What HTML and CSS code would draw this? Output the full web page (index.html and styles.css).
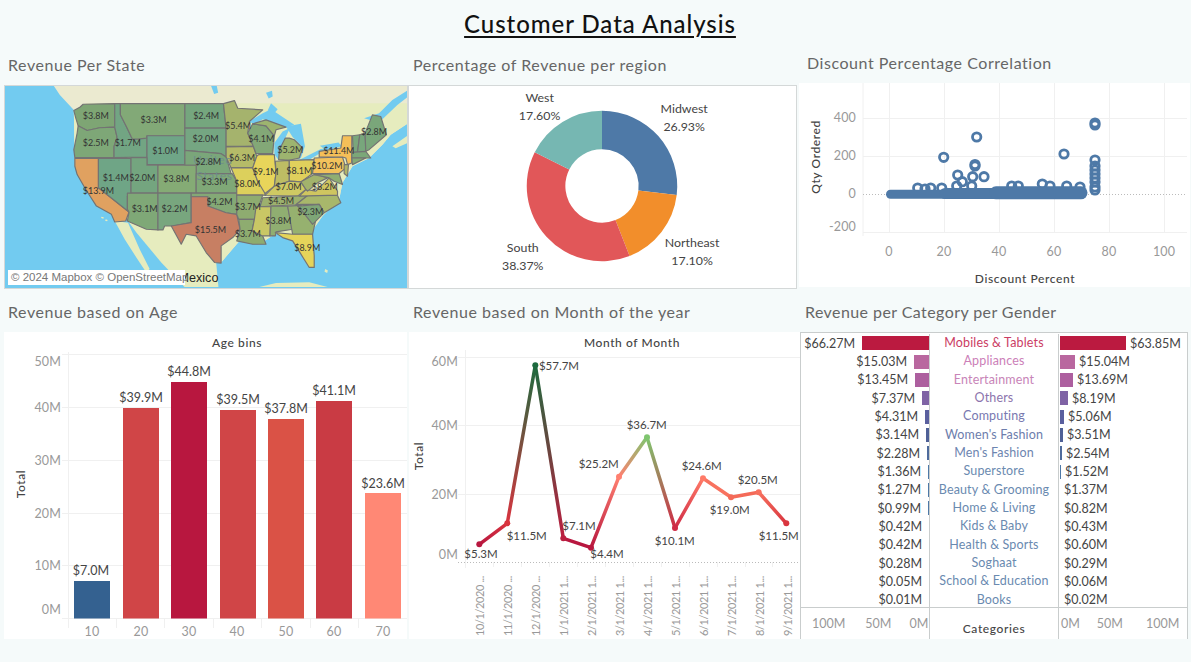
FILE: index.html
```html
<!DOCTYPE html>
<html lang="en">
<head>
<meta charset="utf-8">
<title>Customer Data Analysis</title>
<link rel="stylesheet" href="styles.css">
</head>
<body>
<header class="page-head"><h1>Customer Data Analysis</h1></header>

<section class="row row-top">
  <article class="card c-map">
    <h2>Revenue Per State</h2>
    <div class="panel map-panel">
      <svg class="chart" viewBox="15 108 1209 609" preserveAspectRatio="none">
        <rect class="sea" x="0" y="100" width="1240" height="620"/>
        <polygon class="land-n" points="160,105 1225,105 1225,222 1175,255 1150,285 1110,325 1060,350 1030,400 1020,450 970,500 935,550 945,650 930,655 880,575 830,552 780,585 720,575 665,640 645,640 515,530 388,515 225,350 222,180 180,135"/>
        <polygon class="land" points="260,160 1225,160 1225,222 1175,255 1150,285 1110,325 1060,350 1030,400 1020,450 970,500 935,550 945,650 930,655 880,575 830,552 780,585 720,575 665,640 645,640 515,530 388,515 225,350 222,180"/>
        <polygon class="land" points="385,515 520,530 650,640 657,714 555,714 485,640 410,550"/>
        <polygon class="land" points="345,515 385,520 420,600 450,660 440,670 410,625 375,570"/>
        <polygon class="land" points="1180,290 1225,258 1225,280 1190,296"/>
        <polygon class="land" points="780,714 830,702 930,700 985,714"/>
        <polygon class="land" points="978,660 986,664 984,672 976,668"/>
        <polygon class="land" points="305,502 312,504 311,508 304,506"/>
        <polygon class="land" points="318,510 324,512 322,516 316,514"/>
        <polygon class="water" points="1095,205 1140,190 1180,150 1225,122 1225,142 1195,165 1150,208 1118,212"/>
        <polygon class="water" points="635,108 652,108 656,128 644,132"/>
        <polygon class="water" points="800,128 818,122 820,140 808,146"/>
        <polygon class="water" points="815,160 835,178 825,190 805,182"/>
        <polygon class="water" points="750,215 790,190 815,178 885,225 860,234 820,218 790,208 765,224"/>
        <polygon class="water" points="825,314 825,280 850,245 872,235 858,265 840,300 838,332"/>
        <polygon class="water" points="860,230 905,222 917,290 905,325 895,330 908,290 880,262"/>
        <polygon class="water" points="898,332 965,298 985,295 960,312 920,336"/>
        <polygon class="water" points="962,288 1018,278 1028,290 980,302"/>

        <g class="states">
          <polygon fill="#7ea574" points="222,182 240,172 250,163 345,161 345,232 300,234 262,242 235,228 228,205"/>
          <polygon fill="#7ea777" points="235,228 262,242 300,234 345,232 352,262 343,290 343,324 225,324 222,300 232,250"/>
          <polygon fill="#72a583" points="345,161 362,161 362,195 380,230 395,262 400,268 442,262 442,322 343,324 343,290 352,262 345,232"/>
          <polygon fill="#82a977" points="362,161 556,161 556,258 442,258 440,265 415,268 398,268 395,262 380,230 362,195"/>
          <polygon fill="#6fa587" points="442,258 556,258 556,345 442,345"/>
          <polygon fill="#75a67e" points="556,161 672,161 680,235 556,235"/>
          <polygon fill="#75a682" points="556,235 680,235 680,322 665,312 556,302"/>
          <polygon fill="#7aa67a" points="556,302 665,312 680,322 695,372 590,372 590,347 556,347"/>
          <polygon fill="#e0a160" points="225,326 296,326 296,415 388,488 378,515 345,518 335,495 290,470 258,420 232,375 225,350"/>
          <polygon fill="#6fa586" points="296,326 394,326 394,431 383,440 383,480 388,488 296,415"/>
          <polygon fill="#74a57f" points="394,324 442,324 442,347 475,347 475,431 394,431"/>
          <polygon fill="#85ab75" points="475,347 590,347 590,431 475,431"/>
          <polygon fill="#7fa877" points="383,431 475,431 475,542 440,540 383,515 388,488 383,480"/>
          <polygon fill="#78a67e" points="475,431 575,431 575,520 520,530 495,530 490,542 475,542"/>
          <polygon fill="#7fa877" points="590,372 698,372 712,395 712,431 590,431"/>
          <polygon fill="#84a976" points="575,431 712,431 712,495 680,490 625,470 625,442 575,442"/>
          <polygon fill="#c77f63" points="575,442 625,442 625,470 680,490 712,495 722,540 700,565 665,590 665,642 645,640 620,610 590,560 560,555 545,585 515,530 575,520"/>
          <polygon fill="#a5b36d" points="672,161 705,152 715,175 790,180 750,215 745,250 762,290 680,290 680,235"/>
          <polygon fill="#b5bb68" points="680,292 762,290 772,320 760,355 695,355 680,322"/>
          <polygon fill="#dcd05c" points="695,355 760,355 775,395 797,420 797,437 712,437 712,395"/>
          <polygon fill="#8eac70" points="712,437 790,437 775,480 765,510 718,510 712,495"/>
          <polygon fill="#8eac70" points="718,510 765,510 758,545 790,560 800,585 760,585 712,575 722,540"/>
          <polygon fill="#83a877" points="745,250 760,222 800,228 825,258 820,312 770,312 762,290"/>
          <polygon fill="#9db46f" points="838,330 840,300 858,265 870,265 885,270 910,295 900,325 870,332"/>
          <polygon fill="#9db46f" points="760,222 800,210 860,232 830,240 825,258 800,228"/>
          <polygon fill="#e8d55a" points="778,315 825,315 830,370 825,410 797,432 775,395 760,355 772,320"/>
          <polygon fill="#bebd64" points="828,335 870,332 870,395 825,410 830,370"/>
          <polygon fill="#e0d05c" points="870,332 945,330 940,372 905,397 870,395"/>
          <polygon fill="#cfc963" points="797,438 825,410 870,395 905,397 920,420 895,440"/>
          <polygon fill="#9cb06e" points="782,472 790,445 925,438 890,466"/>
          <polygon fill="#c9c765" points="770,472 815,472 812,560 790,560 758,545 765,510"/>
          <polygon fill="#90ae71" points="815,470 865,470 880,540 830,548 828,560 812,560"/>
          <polygon fill="#96b16f" points="865,470 905,468 950,510 940,555 880,555"/>
          <polygon fill="#e5d45a" points="828,550 880,555 940,555 945,620 945,655 930,655 905,615 880,575 850,565"/>
          <polygon fill="#a8b76b" points="890,466 925,438 1015,438 1025,460 975,490 960,465 905,465"/>
          <polygon fill="#7ea677" points="895,470 960,465 975,490 940,525 905,480"/>
          <polygon fill="#cfc560" points="900,440 920,420 950,425 990,385 1015,425 1015,437"/>
          <polygon fill="#a2b36c" points="905,397 945,375 955,375 985,385 955,400 925,425 920,420"/>
          <polygon fill="#f3c25c" points="945,325 1030,322 1040,355 1020,372 940,372"/>
          <polygon fill="#f5bf58" points="960,305 1025,295 1030,258 1058,258 1058,340 1045,345 1040,325 1030,322 960,322"/>
          <polygon fill="#b2b568" points="1035,345 1048,345 1045,380 1035,372"/>
          <polygon fill="#8fae72" points="945,375 1020,372 1030,405 1005,395 990,385"/>
          <polygon fill="#7aa67b" points="1060,258 1082,255 1075,308 1062,308"/>
          <polygon fill="#78a67c" points="1082,255 1098,250 1100,305 1075,308"/>
          <polygon fill="#7aa67a" points="1098,250 1120,195 1145,200 1162,255 1110,300 1100,305"/>
          <polygon fill="#7ba778" points="1058,308 1100,305 1115,325 1058,325"/>
          <polygon fill="#84a976" points="1058,325 1100,325 1060,345"/>
        </g>
        <g class="map-names">
          <text x="640" y="344">United</text>
          <text x="645" y="390">States</text>
        </g>
        <text class="mexico" x="657" y="698">Mexico</text>
        <g class="vals">
          <text x="288" y="207">$3.8M</text><text x="462" y="220">$3.3M</text><text x="620" y="207">$2.4M</text>
          <text x="716" y="237">$5.4M</text><text x="786" y="277">$4.1M</text><text x="1125" y="255">$2.8M</text>
          <text x="288" y="289">$2.5M</text><text x="384" y="289">$1.7M</text><text x="497" y="312">$1.0M</text>
          <text x="618" y="277">$2.0M</text><text x="873" y="310">$5.2M</text><text x="1019" y="312">$11.4M</text>
          <text x="626" y="346">$2.8M</text><text x="728" y="334">$6.3M</text><text x="799" y="376">$9.1M</text>
          <text x="900" y="373">$8.1M</text><text x="983" y="357">$10.2M</text><text x="348" y="393">$1.4M</text>
          <text x="428" y="393">$2.0M</text><text x="530" y="398">$3.8M</text><text x="645" y="408">$3.3M</text>
          <text x="744" y="413">$8.0M</text><text x="868" y="423">$7.0M</text><text x="977" y="423">$8.2M</text>
          <text x="296" y="435">$13.9M</text><text x="660" y="467">$4.2M</text><text x="745" y="481">$3.7M</text>
          <text x="845" y="465">$4.5M</text><text x="435" y="489">$3.1M</text><text x="525" y="489">$2.2M</text>
          <text x="933" y="497">$2.3M</text><text x="837" y="525">$3.8M</text><text x="633" y="552">$15.5M</text>
          <text x="745" y="564">$3.7M</text><text x="924" y="606">$8.9M</text>
        </g>
      </svg>
      <div class="attribution">© 2024 Mapbox © OpenStreetMap</div>
    </div>
  </article>

  <article class="card c-donut">
    <h2>Percentage of Revenue per region</h2>
    <div class="panel">
      <svg class="chart" viewBox="408 85 389 204">
        <path fill="#4e79a7" d="M602 110A76 76 0 0 1 677.44 195.19L638.73 190.48A37 37 0 0 0 602 149Z"/>
        <path fill="#f28e2b" d="M677.44 195.19A76 76 0 0 1 629.85 256.71L615.56 220.43A37 37 0 0 0 638.73 190.48Z"/>
        <path fill="#e15759" d="M629.85 256.71A76 76 0 0 1 534.06 151.93L568.93 169.41A37 37 0 0 0 615.56 220.43Z"/>
        <path fill="#76b7b2" d="M534.06 151.93A76 76 0 0 1 602 110L602 149A37 37 0 0 0 568.93 169.41Z"/>
        <g class="val mid">
          <text x="539" y="101">West</text><text x="539" y="119">17.60%</text>
          <text x="685" y="112">Midwest</text><text x="685" y="130">26.93%</text>
          <text x="693" y="248">Northeast</text><text x="693" y="266">17.10%</text>
          <text x="522" y="253">South</text><text x="522" y="271">38.37%</text>
        </g>
      </svg>
    </div>
  </article>

  <article class="card c-scatter">
    <h2>Discount Percentage Correlation</h2>
    <div class="panel plain">
      <svg class="chart" viewBox="799 83 391 204">
        <g class="grid">
          <path d="M889.5 83V232M944.5 83V232M999.5 83V232M1054.5 83V232M1109.5 83V232M1164.5 83V232"/>
          <path d="M863 118.5H1187M863 156.5H1187M863 232.5H1187M863 83V236"/>
        </g>
        <path class="zero" d="M863 194.5H1187"/>
        <g class="pts">
          <circle cx="976.7" cy="137" r="4.2"/><circle cx="943.7" cy="157.3" r="4.2"/><circle cx="975" cy="166" r="4.2"/><circle cx="975" cy="164.5" r="4.2"/>
          <circle cx="957.7" cy="175" r="4.2"/><circle cx="984" cy="176.7" r="4.2"/><circle cx="972.7" cy="176.7" r="4.2"/><circle cx="962.3" cy="181.7" r="4.2"/>
          <circle cx="1064" cy="154" r="4.2"/><circle cx="1095" cy="123" r="4.2"/><circle cx="1095" cy="125" r="4.2"/><circle cx="1095" cy="160" r="4.2"/>
          <circle cx="1095" cy="166" r="4.2"/><circle cx="1095" cy="170" r="4.2"/><circle cx="1095" cy="174" r="4.2"/><circle cx="1095" cy="178" r="4.2"/>
          <circle cx="1095" cy="182" r="4.2"/><circle cx="1095" cy="187" r="4.2"/><circle cx="1095" cy="190" r="4.2"/>
          <circle cx="917.7" cy="188" r="4.2"/><circle cx="930.7" cy="188" r="4.2"/><circle cx="925" cy="189" r="4.2"/><circle cx="941.7" cy="188" r="4.2"/>
          <circle cx="956.7" cy="186" r="4.2"/><circle cx="971.7" cy="186" r="4.2"/><circle cx="1011.7" cy="186" r="4.2"/><circle cx="1018.3" cy="186" r="4.2"/>
          <circle cx="1042.3" cy="184" r="4.2"/><circle cx="1050" cy="186" r="4.2"/><circle cx="1066.7" cy="186" r="4.2"/><circle cx="1080" cy="187" r="4.2"/>
        </g>
        <path class="band" d="M890.500 194.300H950"/>
        <path class="band mid-band" d="M945 193.500H1000"/>
        <path class="band wide" d="M996 192.800H1081"/>
        <g class="tick end">
          <text x="856" y="122">400</text><text x="856" y="160">200</text><text x="856" y="198">0</text><text x="856" y="231">-200</text>
        </g>
        <g class="tick mid">
          <text x="889" y="256">0</text><text x="944" y="256">20</text><text x="999" y="256">40</text><text x="1054" y="256">60</text><text x="1109" y="256">80</text><text x="1164" y="256">100</text>
        </g>
        <text class="ax mid" x="1025" y="283">Discount Percent</text>
        <text class="ax mid" transform="translate(820 157) rotate(-90)">Qty Ordered</text>
      </svg>
    </div>
  </article>
</section>

<section class="row row-bottom">
  <article class="card c-bar">
    <h2>Revenue based on Age</h2>
    <div class="panel plain">
      <svg class="chart" viewBox="4 332 403 307">
        <g class="grid">
          <path d="M62 354.5H407M62 407.5H407M62 460.5H407M62 513.5H407M62 565.5H407M62 618.5H407M68.5 352V628"/>
          <path d="M116.5 618V628M164.5 618V628M213.5 618V628M261.5 618V628M310.5 618V628M358.5 618V628"/>
        </g>
        <rect x="74" y="581" width="36" height="37.500" fill="#346190"/>
        <rect x="123" y="408" width="36" height="210.500" fill="#d04547"/>
        <rect x="171" y="382" width="36" height="236.500" fill="#b8173f"/>
        <rect x="220" y="410" width="36" height="208.500" fill="#d04547"/>
        <rect x="268" y="419" width="36" height="199.500" fill="#da5246"/>
        <rect x="316" y="401" width="36" height="217.500" fill="#c93b44"/>
        <rect x="365" y="493" width="36" height="125.500" fill="#ff8875"/>
        <g class="val mid">
          <text x="91" y="575">$7.0M</text><text x="141" y="402">$39.9M</text><text x="189" y="376">$44.8M</text>
          <text x="238" y="404">$39.5M</text><text x="286" y="413">$37.8M</text><text x="334" y="395">$41.1M</text><text x="383" y="488">$23.6M</text>
        </g>
        <g class="tick end">
          <text x="61" y="366">50M</text><text x="61" y="412">40M</text><text x="61" y="465">30M</text><text x="61" y="518">20M</text><text x="61" y="570">10M</text><text x="61" y="614">0M</text>
        </g>
        <g class="tick mid">
          <text x="92" y="636">10</text><text x="141" y="636">20</text><text x="189" y="636">30</text><text x="237" y="636">40</text><text x="286" y="636">50</text><text x="334" y="636">60</text><text x="383" y="636">70</text>
        </g>
        <text class="ax mid" x="237" y="347">Age bins</text>
        <text class="ax mid" transform="translate(25 484) rotate(-90)">Total</text>
      </svg>
    </div>
  </article>

  <article class="card c-line">
    <h2>Revenue based on Month of the year</h2>
    <div class="panel plain">
      <svg class="chart" viewBox="409 332 391 307">
        <defs>
          <linearGradient id="s1" gradientUnits="userSpaceOnUse" x1="479" y1="544" x2="507" y2="523"><stop offset="0" stop-color="#b8173f"/><stop offset="1" stop-color="#d9343f"/></linearGradient>
          <linearGradient id="s2" gradientUnits="userSpaceOnUse" x1="507" y1="523" x2="535" y2="365"><stop offset="0" stop-color="#d9343f"/><stop offset="1" stop-color="#1d6a3e"/></linearGradient>
          <linearGradient id="s3" gradientUnits="userSpaceOnUse" x1="535" y1="365" x2="563" y2="538"><stop offset="0" stop-color="#1d6a3e"/><stop offset="1" stop-color="#bb1f40"/></linearGradient>
          <linearGradient id="s5" gradientUnits="userSpaceOnUse" x1="591" y1="548" x2="619" y2="477"><stop offset="0" stop-color="#b8173f"/><stop offset="1" stop-color="#ff8070"/></linearGradient>
          <linearGradient id="s6" gradientUnits="userSpaceOnUse" x1="619" y1="477" x2="647" y2="437"><stop offset="0" stop-color="#ff8070"/><stop offset="1" stop-color="#7fc56f"/></linearGradient>
          <linearGradient id="s7" gradientUnits="userSpaceOnUse" x1="647" y1="437" x2="675" y2="528"><stop offset="0" stop-color="#7fc56f"/><stop offset="1" stop-color="#cf2a45"/></linearGradient>
          <linearGradient id="s8" gradientUnits="userSpaceOnUse" x1="675" y1="528" x2="703" y2="478"><stop offset="0" stop-color="#cf2a45"/><stop offset="1" stop-color="#ff7b68"/></linearGradient>
          <linearGradient id="s11" gradientUnits="userSpaceOnUse" x1="759" y1="492" x2="786" y2="523"><stop offset="0" stop-color="#f7705e"/><stop offset="1" stop-color="#d9363f"/></linearGradient>
        </defs>
        <g class="grid">
          <path d="M458 357.500H800M458 425.500H800M458 494.500H800M465.500 350V568"/>
          <path d="M493.500 562V567M521.500 562V567M549.500 562V567M577.500 562V567M605.500 562V567M633.500 562V567M661.500 562V567M689.500 562V567M717.500 562V567M745.500 562V567M772.500 562V567"/>
        </g>
        <path class="zero" d="M458 562.500H800"/>
        <g class="seg">
          <path stroke="url(#s1)" d="M479.300 544.300L507.300 523.300"/>
          <path stroke="url(#s2)" d="M507.300 523.300L535.300 365.300"/>
          <path stroke="url(#s3)" d="M535.300 365.300L563.300 538.300"/>
          <path stroke="#b8173f" d="M563.300 538.300L591 547.700"/>
          <path stroke="url(#s5)" d="M591 547.700L619 476.700"/>
          <path stroke="url(#s6)" d="M619 476.700L647 437.300"/>
          <path stroke="url(#s7)" d="M647 437.300L675 528"/>
          <path stroke="url(#s8)" d="M675 528L703 478.300"/>
          <path stroke="#f8725f" d="M703 478.300L731 497.300"/>
          <path stroke="#f46a58" d="M731 497.300L758.700 492.300"/>
          <path stroke="url(#s11)" d="M758.700 492.300L786.300 523.300"/>
        </g>
        <circle cx="479.300" cy="544.300" r="3" fill="#b8173f"/><circle cx="507.300" cy="523.300" r="3" fill="#d9343f"/>
        <circle cx="535.300" cy="365.300" r="3" fill="#1d6a3e"/><circle cx="563.300" cy="538.300" r="3" fill="#bb1f40"/>
        <circle cx="591" cy="547.700" r="3" fill="#b8173f"/><circle cx="619" cy="476.700" r="3" fill="#ff8070"/>
        <circle cx="647" cy="437.300" r="3" fill="#7fc56f"/><circle cx="675" cy="528" r="3" fill="#cf2a45"/>
        <circle cx="703" cy="478.300" r="3" fill="#ff7b68"/><circle cx="731" cy="497.300" r="3" fill="#f46a58"/>
        <circle cx="758.700" cy="492.300" r="3" fill="#f7705e"/><circle cx="786.300" cy="523.300" r="3" fill="#d9363f"/>
        <g class="val small mid">
          <text x="559" y="369.500">$57.7M</text><text x="481" y="558">$5.3M</text><text x="526.700" y="540">$11.5M</text>
          <text x="579" y="530">$7.1M</text><text x="607" y="558">$4.4M</text><text x="598.700" y="468">$25.2M</text>
          <text x="646.700" y="429">$36.7M</text><text x="674.700" y="545">$10.1M</text><text x="701.700" y="470">$24.6M</text>
          <text x="729.700" y="514">$19.0M</text><text x="757.700" y="484">$20.5M</text><text x="778.700" y="540">$11.5M</text>
        </g>
        <g class="tick end">
          <text x="458" y="366">60M</text><text x="458" y="430">40M</text><text x="458" y="499">20M</text><text x="458" y="559">0M</text>
        </g>
        <g class="tick-date">
          <text transform="translate(484 636) rotate(-90)">10/1/2020 ...</text>
          <text transform="translate(512 636) rotate(-90)">11/1/2020 ...</text>
          <text transform="translate(540 636) rotate(-90)">12/1/2020 ...</text>
          <text transform="translate(568 636) rotate(-90)">1/1/2021 1...</text>
          <text transform="translate(596 636) rotate(-90)">2/1/2021 1...</text>
          <text transform="translate(624 636) rotate(-90)">3/1/2021 1...</text>
          <text transform="translate(652 636) rotate(-90)">4/1/2021 1...</text>
          <text transform="translate(680 636) rotate(-90)">5/1/2021 1...</text>
          <text transform="translate(708 636) rotate(-90)">6/1/2021 1...</text>
          <text transform="translate(736 636) rotate(-90)">7/1/2021 1...</text>
          <text transform="translate(764 636) rotate(-90)">8/1/2021 1...</text>
          <text transform="translate(792 636) rotate(-90)">9/1/2021 1...</text>
        </g>
        <text class="ax mid" x="632" y="347">Month of Month</text>
        <text class="ax mid" transform="translate(423 456) rotate(-90)">Total</text>
      </svg>
    </div>
  </article>

  <article class="card c-cat">
    <h2>Revenue per Category per Gender</h2>
    <div class="panel cat-panel">
      <div class="cat-rows">
        <div class="cat-row first"><div class="side left"><span>$66.27M</span><i class="bar big" style="width:67px;background:#bb1a40"></i></div><div class="name" style="color:#cb3c63">Mobiles &amp; Tablets</div><div class="side right"><i class="bar big" style="width:66px;background:#bb1a40"></i><span>$63.85M</span></div></div>
        <div class="cat-row"><div class="side left"><span>$15.03M</span><i class="bar" style="width:15px;background:#b9679f"></i></div><div class="name" style="color:#cc80b8">Appliances</div><div class="side right"><i class="bar" style="width:15px;background:#b9679f"></i><span>$15.04M</span></div></div>
        <div class="cat-row"><div class="side left"><span>$13.45M</span><i class="bar" style="width:14px;background:#ad5f9f"></i></div><div class="name" style="color:#c884b8">Entertainment</div><div class="side right"><i class="bar" style="width:13px;background:#ad5f9f"></i><span>$13.69M</span></div></div>
        <div class="cat-row"><div class="side left"><span>$7.37M</span><i class="bar" style="width:7px;background:#7f63a5"></i></div><div class="name" style="color:#8c74ad">Others</div><div class="side right"><i class="bar" style="width:8px;background:#7f63a5"></i><span>$8.19M</span></div></div>
        <div class="cat-row"><div class="side left"><span>$4.31M</span><i class="bar" style="width:4px;background:#5a5f9e"></i></div><div class="name" style="color:#7878b0">Computing</div><div class="side right"><i class="bar" style="width:4px;background:#5a5f9e"></i><span>$5.06M</span></div></div>
        <div class="cat-row"><div class="side left"><span>$3.14M</span><i class="bar" style="width:3px;background:#4f6096"></i></div><div class="name" style="color:#6d7dac">Women's Fashion</div><div class="side right"><i class="bar" style="width:3px;background:#4f6096"></i><span>$3.51M</span></div></div>
        <div class="cat-row"><div class="side left"><span>$2.28M</span><i class="bar" style="width:2px;background:#4f6b9c"></i></div><div class="name" style="color:#6d85b0">Men's Fashion</div><div class="side right"><i class="bar" style="width:2px;background:#4f6b9c"></i><span>$2.54M</span></div></div>
        <div class="cat-row"><div class="side left"><span>$1.36M</span><i class="bar" style="width:1px;background:#4e79a7"></i></div><div class="name" style="color:#6a8ab0">Superstore</div><div class="side right"><i class="bar" style="width:1px;background:#4e79a7"></i><span>$1.52M</span></div></div>
        <div class="cat-row"><div class="side left"><span>$1.27M</span><i class="bar" style="width:1px;background:#4e79a7"></i></div><div class="name" style="color:#6a8ab0">Beauty &amp; Grooming</div><div class="side right"><i class="bar" style="width:0"></i><span>$1.37M</span></div></div>
        <div class="cat-row"><div class="side left"><span>$0.99M</span><i class="bar" style="width:1px;background:#4e79a7"></i></div><div class="name" style="color:#6a8ab0">Home &amp; Living</div><div class="side right"><i class="bar" style="width:0"></i><span>$0.82M</span></div></div>
        <div class="cat-row"><div class="side left"><span>$0.42M</span><i class="bar" style="width:0"></i></div><div class="name" style="color:#6a8ab0">Kids &amp; Baby</div><div class="side right"><i class="bar" style="width:0"></i><span>$0.43M</span></div></div>
        <div class="cat-row"><div class="side left"><span>$0.42M</span><i class="bar" style="width:0"></i></div><div class="name" style="color:#6a8ab0">Health &amp; Sports</div><div class="side right"><i class="bar" style="width:0"></i><span>$0.60M</span></div></div>
        <div class="cat-row"><div class="side left"><span>$0.28M</span><i class="bar" style="width:0"></i></div><div class="name" style="color:#6a8ab0">Soghaat</div><div class="side right"><i class="bar" style="width:0"></i><span>$0.29M</span></div></div>
        <div class="cat-row"><div class="side left"><span>$0.05M</span><i class="bar" style="width:0"></i></div><div class="name" style="color:#6a8ab0">School &amp; Education</div><div class="side right"><i class="bar" style="width:0"></i><span>$0.06M</span></div></div>
        <div class="cat-row"><div class="side left"><span>$0.01M</span><i class="bar" style="width:0"></i></div><div class="name" style="color:#6a8ab0">Books</div><div class="side right"><i class="bar" style="width:0"></i><span>$0.02M</span></div></div>
      </div>
      <div class="cat-axis">
        <div class="axis-cell axis-left"><span>100M</span><span>50M</span><span>0M</span></div>
        <div class="axis-cell axis-mid">Categories</div>
        <div class="axis-cell axis-right"><span>0M</span><span>50M</span><span>100M</span></div>
      </div>
    </div>
  </article>
</section>
</body>
</html>
```
FILE: styles.css
```css
* { box-sizing: border-box; }
html, body { margin: 0; padding: 0; }
body {
  width: 1191px; height: 662px; overflow: hidden;
  background: #f5fafa;
  font-family: "Lato", "Open Sans", sans-serif;
  color: #333;
}
.page-head { height: 49px; display: flex; justify-content: center; padding-left: 9px; }
h1 {
  margin: 9px 0 0; font-size: 24px; line-height: 30px; height: 30px; font-weight: 500;
  color: #111; letter-spacing: 0.95px;
  text-decoration: underline; text-underline-offset: 3px; text-decoration-thickness: 1.5px;
}
.row { display: flex; padding-left: 4px; }
.row-top { height: 240px; }
.row-bottom { height: 350px; }
.card { display: flex; flex-direction: column; }
h2 {
  margin: 0; font-size: 16px; line-height: 20px; height: 30px; padding-bottom: 10px;
  font-weight: 400; color: #666; letter-spacing: 0.55px; white-space: nowrap;
}
.row-top h2 { margin-top: 6px; }
.row-bottom h2 { margin-top: 13px; }
.panel { position: relative; background: #fff; border: 1px solid #d4d8d8; overflow: hidden; }
.panel.plain { border: 0; }
.chart { display: block; width: 100%; height: 100%; }
.c-map { width: 404px; }
.c-map h2 { padding-left: 4px; }
.c-donut { width: 389px; }
.c-donut h2 { padding-left: 5px; }
.c-scatter { width: 391px; margin-left: 2px; }
.c-scatter h2 { padding-left: 8px; margin-top: 4px; }
.row-top .panel { height: 204px; }
.row-bottom .panel { height: 307px; }
.c-bar { width: 403px; }
.c-bar h2 { padding-left: 4px; }
.c-line { width: 391px; margin-left: 2px; }
.c-line h2 { padding-left: 4px; }
.c-cat { width: 388px; }
.c-cat h2 { padding-left: 5px; letter-spacing: .42px; }

/* map */
.sea, .water { fill: #72cbf0; }
.land { fill: #e6ecbe; }
.land-n { fill: #ebead0; }
.states polygon { stroke: #737373; stroke-width: 3.5; stroke-linejoin: round; }
.vals text { font-size: 27px; fill: #333; text-anchor: middle; }
.map-names text { font-size: 36px; fill: #6f8f8a; text-anchor: middle; letter-spacing: 2px; }
.mexico { font-size: 38px; fill: #222; text-anchor: end; font-family: "Liberation Sans", sans-serif; }
.attribution {
  position: absolute; left: 3px; bottom: 3px; width: 177px; height: 15px; padding-left: 3px;
  background: #fff; color: #777; font: 11.5px/15px "Liberation Sans", Arial, sans-serif; white-space: nowrap;
}

/* svg text */
.mid { text-anchor: middle; }
.end { text-anchor: end; }
.val text { font-size: 12.5px; fill: #444; }
.val.small text { font-size: 11.5px; }
.tick text { font-size: 12.5px; fill: #999; letter-spacing: .15px; }
.tick-date text { font-size: 11px; fill: #999; letter-spacing: -.4px; }
.ax { font-size: 12px; fill: #444; font-weight: 500; letter-spacing: .6px; }
.grid path { stroke: #f0f0f0; stroke-width: 1; fill: none; }
.zero { stroke: #bbb; stroke-width: 1; stroke-dasharray: 1 2; fill: none; }
.pts circle { fill: none; stroke: #4e79a7; stroke-width: 2.8; }
.band { stroke: #4e79a7; stroke-width: 9; stroke-linecap: round; fill: none; }
.band.mid-band { stroke-width: 11; }
.band.wide { stroke-width: 13; }
.seg path { fill: none; stroke-width: 3.5; stroke-linecap: round; }

/* category table */
.cat-panel { border: 1px solid #c9cdcd; border-bottom: 0; display: flex; flex-direction: column; font-size: 12.5px; }
.cat-rows { height: 275px; padding-top: 1px; border-bottom: 1px solid #c9cdcd; }
.cat-row { display: grid; grid-template-columns: 128px 130px 1fr; height: 18.35px; align-items: center; }
.side { display: flex; align-items: center; gap: 4px; height: 100%; color: #444; }
.side.left { justify-content: flex-end; gap: 7px; }
.side.right { padding-left: 1px; }
.side span { flex: none; }
.bar { display: block; height: 14px; flex: none; }
.name { height: 100%; text-align: center; line-height: 18px; white-space: nowrap; letter-spacing: .15px; border-left: 1px solid #c9cdcd; border-right: 1px solid #c9cdcd; }
.cat-axis { display: grid; grid-template-columns: 128px 130px 1fr; height: 31px; color: #999; }
.axis-cell { display: flex; align-items: flex-start; padding-top: 8px; }
.axis-left { padding-left: 11px; gap: 20px; }
.axis-left span:last-child { margin-left: -2px; }
.axis-right { padding-left: 2px; gap: 17px; }
.axis-right span:last-child { margin-left: 6px; }
.axis-mid { justify-content: center; padding-top: 13px; font-size: 12px; font-weight: 500; color: #444; letter-spacing: .6px; border-left: 1px solid #c9cdcd; border-right: 1px solid #c9cdcd; }
```
